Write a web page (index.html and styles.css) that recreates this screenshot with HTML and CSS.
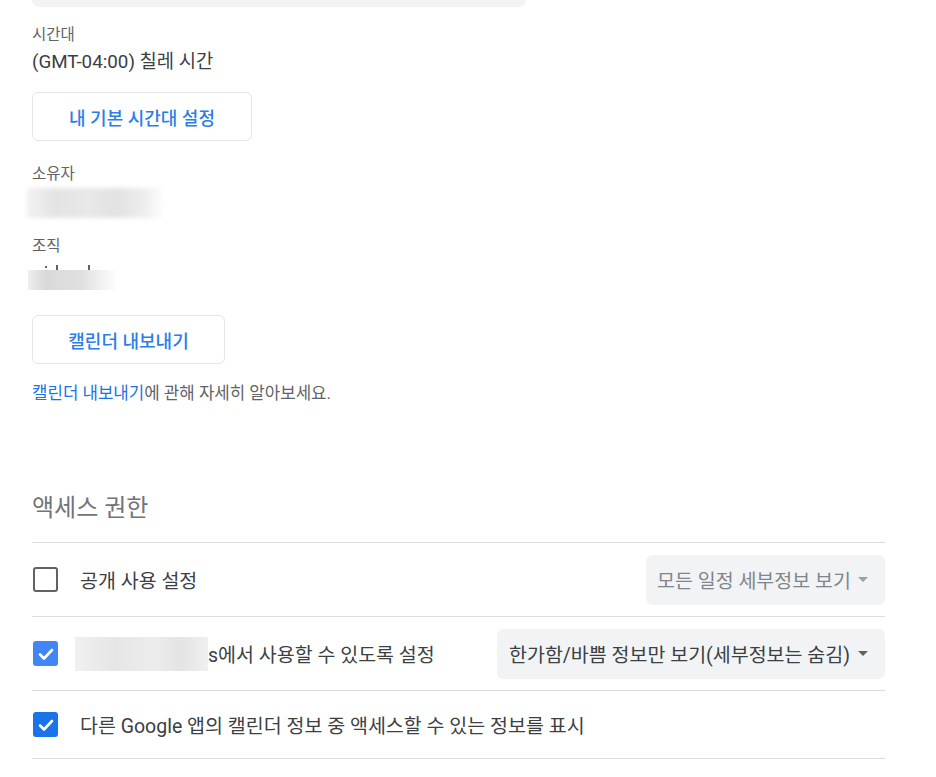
FILE: index.html
```html
<!DOCTYPE html>
<html lang="ko">
<head>
<meta charset="utf-8">
<link rel="stylesheet" href="styles.css">
</head>
<body>
<div class="page">
  <div class="field-tail"></div>

  <div class="label first">시간대</div>
  <div class="value">(GMT-04:00) 칠레 시간</div>
  <button class="btn btn-tz">내 기본 시간대 설정</button>

  <div class="label owner-label">소유자</div>
  <div class="blur-owner"></div>

  <div class="label org-label">조직</div>
  <div class="blur-wrap">
    <div class="org-ticks"><span class="t1"></span><span class="t2"></span><span class="t3"></span></div>
    <div class="blur-org"></div>
  </div>

  <button class="btn btn-export">캘린더 내보내기</button>
  <p class="learn"><span class="link">캘린더 내보내기</span>에 관해 자세히 알아보세요.</p>

  <h2 class="heading">액세스 권한</h2>

  <ul class="perm-list">
    <li class="perm-row">
      <span class="cb"></span>
      <span class="perm-label">공개 사용 설정</span>
      <div class="select disabled select-public"><span>모든 일정 세부정보 보기</span><span class="arrow"></span></div>
    </li>
    <li class="perm-row">
      <span class="cb checked light"><svg viewBox="0 0 24 24" width="24" height="24"><path d="M6 12.5l4 4 8-8.5" fill="none" stroke="#fff" stroke-width="2.6" stroke-linecap="round" stroke-linejoin="round"/></svg></span>
      <span class="perm-label"><span class="blur-inline"></span>s에서 사용할 수 있도록 설정</span>
      <div class="select select-org"><span>한가함/바쁨 정보만 보기(세부정보는 숨김)</span><span class="arrow"></span></div>
    </li>
    <li class="perm-row short">
      <span class="cb checked"><svg viewBox="0 0 24 24" width="24" height="24"><path d="M6 12.5l4 4 8-8.5" fill="none" stroke="#fff" stroke-width="2.6" stroke-linecap="round" stroke-linejoin="round"/></svg></span>
      <span class="perm-label">다른 Google 앱의 캘린더 정보 중 액세스할 수 있는 정보를 표시</span>
    </li>
  </ul>
</div>
</body>
</html>
```

FILE: styles.css
```css
html, body {
  margin: 0;
  padding: 0;
  background: #ffffff;
}
body {
  font-family: Roboto, "Noto Sans CJK KR", sans-serif;
  color: #3c4043;
}
.page {
  padding-left: 32px;
  width: 853px;
}
.field-tail {
  width: 494px;
  height: 7px;
  background: #f1f3f4;
  border-radius: 0 0 7px 7px;
}
.label {
  font-size: 15.5px;
  line-height: 20px;
  color: #5f6368;
}
.label.first { margin-top: 18px; }
.value {
  margin-top: 5px;
  font-size: 18.8px;
  line-height: 24px;
  color: #3c4043;
}
.btn {
  display: block;
  box-sizing: border-box;
  height: 49px;
  padding: 0;
  background: #fff;
  border: 1px solid #e3e5e8;
  border-radius: 6px;
  font-family: Roboto, "Noto Sans CJK KR", sans-serif;
  font-size: 18px;
  font-weight: 500;
  color: #2b7de9;
}
.btn-tz { margin-top: 18px; width: 220px; }
.owner-label { margin-top: 23px; }
.blur-owner {
  margin-top: 4px;
  margin-left: -5px;
  width: 138px;
  height: 30px;
  background: linear-gradient(90deg, #f2f2f2 0%, #e4e4e4 20%, #e8e8e8 45%, #e2e2e2 65%, #eeeeee 85%, #ffffff 100%);
  filter: blur(2px);
}
.org-label { margin-top: 18px; }
.blur-wrap {
  margin-top: 8px;
  display: flex;
  flex-direction: column;
}
.org-ticks {
  display: flex;
  align-items: flex-end;
  height: 6px;
}
.org-ticks span {
  width: 2px;
  background: #5f6368;
}
.org-ticks .t1 { margin-left: 13px; height: 2px; margin-bottom: 2px; }
.org-ticks .t2 { margin-left: 9px; height: 5px; }
.org-ticks .t3 { margin-left: 30px; height: 5px; }
.blur-org {
  margin-left: -4px;
  width: 90px;
  height: 20px;
  background: linear-gradient(90deg, #eeeeee 0%, #d9d9d9 20%, #e0e0e0 60%, #f4f4f4 85%, #ffffff 100%);
}
.btn-export { margin-top: 25px; width: 193px; }
.learn {
  margin: 19px 0 0;
  font-size: 16.8px;
  line-height: 20px;
  color: #5f6368;
}
.link { color: #1a73e8; }
.heading {
  margin: 90px 0 0;
  font-size: 24px;
  line-height: 30px;
  font-weight: 400;
  color: #70757a;
}
.perm-list {
  list-style: none;
  margin: 19px 0 0;
  padding: 0;
  border-top: 1px solid #dadce0;
}
.perm-row {
  display: flex;
  align-items: center;
  min-height: 73px;
  border-bottom: 1px solid #dadce0;
}
.perm-row.short { min-height: 67px; }
.cb {
  box-sizing: border-box;
  width: 25px;
  height: 25px;
  flex: none;
  border: 2px solid #5f6368;
  border-radius: 3px;
  margin-left: 1px;
  display: flex;
  align-items: center;
  justify-content: center;
}
.cb.checked {
  border: none;
  background: #1a73e8;
}
.cb.checked.light { background: #4285f4; }
.perm-label {
  margin-left: 22px;
  font-size: 19.5px;
  color: #3c4043;
  display: flex;
  align-items: center;
  flex: 1;
}
.blur-inline {
  display: inline-block;
  width: 133px;
  height: 34px;
  margin-left: -5px;
  background: linear-gradient(90deg, #f0f0f0, #e6e6e6 30%, #ececec 60%, #e4e4e4 80%, #f0f0f0);
}
.select {
  box-sizing: border-box;
  height: 50px;
  background: #f1f3f4;
  border-radius: 6px;
  display: flex;
  align-items: center;
  padding: 0 17px 0 12px;
  font-size: 19.5px;
  color: #3c4043;
  flex: none;
}
.select.disabled { color: #80868b; }
.select-public { width: 239px; padding-left: 11px; }
.select-org { width: 388px; }
.arrow {
  margin-left: auto;
  width: 0;
  height: 0;
  border-left: 5px solid transparent;
  border-right: 5px solid transparent;
  border-top: 5px solid #5f6368;
}
.select.disabled .arrow { border-top-color: #9aa0a6; }
```
